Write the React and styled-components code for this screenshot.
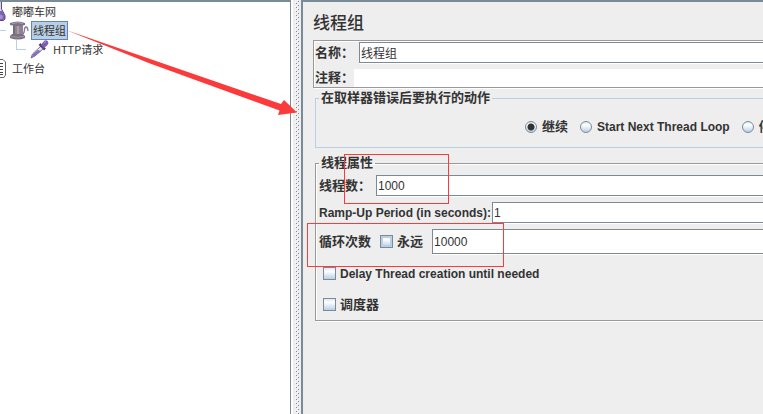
import React, { useState } from 'react'
import styled, { createGlobalStyle } from 'styled-components'

const GlobalStyle = createGlobalStyle`
    * {
        box-sizing: border-box;
    }

    body {
        margin: 0;
        overflow: hidden;
        background: #eee;
        color: #333;
        font-family: "Liberation Sans", "Noto Sans CJK SC", sans-serif;
        font-size: 12px;
    }
`;

const FlaskIcon = () => (
    <svg width="8" height="19" viewBox="0 0 8 19">
        <path d="M0 0H1.500V7L5 13.500V17L3.500 18.500H0Z" fill="#d9d3e6" />
        <path d="M0 9H2.500L5 14V17L3.500 18.500H0Z" fill="#7d62b5" />
        <path d="M0 13Q2 12 3 15L2 17H0Z" fill="#a58fd0" />
        <path d="M1.500 0V7L5 13.500V17L3.500 18.500H0" fill="none" stroke="#5f4c86" />
    </svg>
);

const SpoolIcon = () => (
    <svg width="19" height="19" viewBox="0 0 19 19">
        <path d="M3 4H13V14H3Z" fill="#8d8490" />
        <path d="M3 4H5V14H3Z" fill="#756c7b" />
        <path d="M7 4H9V14H7Z" fill="#aaa1ad" />
        <path d="M0 2Q8 -1 15 2V4Q8 6 0 4Z" fill="#7c7281" />
        <path d="M2 2.500Q8 0.500 13 2.500" fill="none" stroke="#aaa0b0" />
        <path d="M2 13H13L15 15V17Q8 20 0 17V15Z" fill="#7a707f" />
        <path d="M1 15.500Q8 17 14 15.500" fill="none" stroke="#a198aa" />
        <path d="M12 13C16 13 13 6 16 6C18 6 17.500 8 18 10" fill="none" stroke="#8177a0" strokeWidth="1.300" />
    </svg>
);

const DropperIcon = () => (
    <svg width="19" height="19" viewBox="0 0 19 19">
        <path d="M11 6L13.500 8.500L5 16L1 18L2.500 14Z" fill="#e3e5ef" stroke="#77728d" />
        <path d="M8 10L11 11L5 16L1.500 17.500L3 14Z" fill="#8b6dbd" />
        <path d="M9.500 4L15 9.500" stroke="#514276" strokeWidth="2.500" />
        <path d="M11 5L14 1Q16 -0.500 18 1.500Q19 4 17 5.500L14 8Z" fill="#7d5eb3" />
        <path d="M14 3L16 1.500" stroke="#ad96d0" />
    </svg>
);

const ClipboardIcon = () => (
    <svg width="8" height="19" viewBox="0 0 8 19">
        <path d="M0 0.500H3L5.500 3V16L4 18.500H0" fill="#fff" stroke="#666" />
        <path d="M0 4.500H3M0 7.500H3M0 10.500H3M0 13.500H3M0 15.500H3" stroke="#444" />
    </svg>
);

function Tree() {
    return (
        <TreePane>
            <TreeRow>
                <FlaskIcon />
                <TreeLabel>嘟嘟车网</TreeLabel>
            </TreeRow>
            <TreeRow>
                <Branch $width={6} />
                <SpoolIcon />
                <TreeLabel $selected>线程组</TreeLabel>
            </TreeRow>
            <TreeRow>
                <Branch $indent={16} $width={10} $corner />
                <DropperIcon />
                <TreeLabel>HTTP请求</TreeLabel>
            </TreeRow>
            <TreeRow>
                <ClipboardIcon />
                <TreeLabel>工作台</TreeLabel>
            </TreeRow>
        </TreePane>
    );
}

function SplitBar() {
    return (
        <Divider>
            <svg width="5" height="100%">
                <defs>
                    <pattern id="grip" width="5" height="4" patternUnits="userSpaceOnUse">
                        <rect x="0" y="2" width="1" height="1" fill="#fff" />
                        <rect x="1" y="3" width="1" height="1" fill="#7a8a99" />
                        <rect x="2" y="0" width="1" height="1" fill="#fff" />
                        <rect x="3" y="1" width="1" height="1" fill="#7a8a99" />
                    </pattern>
                </defs>
                <rect width="5" height="100%" fill="url(#grip)" />
            </svg>
        </Divider>
    );
}

const actions = [
    { name: '继续' },
    { name: 'Start Next Thread Loop', latin: true },
    { name: '停止线程' },
];

function App() {
    const [action, setAction] = useState('继续');

    return (
        <Page>
            <GlobalStyle />
            <Tree />
            <SplitBar />
            <EditorPane>
                <Title>线程组</Title>
                <NameBox>
                    <NameRow>
                        <Label htmlFor="name">名称：</Label>
                        <TextField id="name" defaultValue="线程组" />
                    </NameRow>
                    <CommentRow>
                        <Label htmlFor="comment">注释：</Label>
                        <CommentField id="comment" />
                    </CommentRow>
                </NameBox>

                <Group $color="#b8cfe5">
                    <Legend>在取样器错误后要执行的动作</Legend>
                    <RadioRow>
                        {actions.map(({ name, latin }) => (
                            <Choice key={name} $latin={latin}>
                                <Radio
                                    name="action"
                                    checked={action === name}
                                    onChange={() => setAction(name)}
                                />
                                {name}
                            </Choice>
                        ))}
                    </RadioRow>
                </Group>

                <Group $color="#999" $etched>
                    <Legend>线程属性</Legend>
                    <Fields>
                        <FieldRow $gap={5}>
                            <Label htmlFor="threads">线程数：</Label>
                            <TextField id="threads" defaultValue="1000" />
                        </FieldRow>
                        <FieldRow $gap={1}>
                            <Label htmlFor="ramp" $latin>Ramp-Up Period (in seconds):</Label>
                            <TextField id="ramp" defaultValue="1" />
                        </FieldRow>
                        <FieldRow $gap={9}>
                            <Label htmlFor="loops">循环次数</Label>
                            <Choice>
                                <Checkbox $hot />
                                永远
                            </Choice>
                            <TextField id="loops" defaultValue="10000" $tall />
                        </FieldRow>
                    </Fields>
                    <CheckRow>
                        <Choice $latin><Checkbox />Delay Thread creation until needed</Choice>
                    </CheckRow>
                    <CheckRow>
                        <Choice><Checkbox />调度器</Choice>
                    </CheckRow>
                </Group>
            </EditorPane>

            {/* red notes drawn over the window */}
            <Mark $x={344} $y={154} $w={105} $h={50} />
            <Mark $x={307} $y={223} $w={197} $h={44} />
            <Arrow width="300" height="120" viewBox="0 0 300 120">
                <path d="M66 30L281 104L284 100L297 112.500L278 115L279.500 110.500L150 63.500Z" fill="#fb3b3b" />
            </Arrow>
        </Page>
    );
}

const Page = styled.div`
    position: relative;
    display: flex;
    min-height: 100vh;
    overflow: hidden;
`;

const TreePane = styled.div`
    flex: 0 0 291px;
    background: #fff;
    border-top: 2px solid #7a8a99;
    border-right: 1px solid #7a8a99;
`;

const TreeRow = styled.div`
    display: flex;
    align-items: center;
    height: 19px;

    svg {
        flex: none;
    }
`;

const TreeLabel = styled.span`
    height: 19px;
    margin-left: 2px;
    padding: 0 1px;
    border: 1px solid ${(p) => (p.$selected ? '#6382bf' : 'transparent')};
    background: ${(p) => (p.$selected ? '#b8cfe5' : 'none')};
    font-family: "Noto Sans CJK SC", sans-serif;
    font-size: 11px;
    line-height: 17px;
    white-space: nowrap;
`;

const Branch = styled.span`
    align-self: flex-start;
    width: ${(p) => p.$width}px;
    height: 10px;
    margin-left: ${(p) => p.$indent || 0}px;
    margin-right: 4px;
    border-bottom: 1px solid #b8cfe5;
    border-left: ${(p) => (p.$corner ? '1px solid #b8cfe5' : 'none')};
`;

const Divider = styled.div`
    flex: 0 0 10px;
    display: flex;
    padding-left: 2px;
    border-left: 2px solid #fff;
    background: #eee;
`;

const EditorPane = styled.main`
    flex: 1;
    min-width: 0;
    padding: 10px 0 0 10px;
    border-top: 2px solid #7a8a99;
    border-left: 2px solid #7a8a99;
    overflow: hidden;
    white-space: nowrap;
`;

const Title = styled.h1`
    margin: 0;
    height: 28px;
    font-size: 17px;
    font-weight: 500;
    line-height: 24px;
`;

const NameBox = styled.div`
    margin-right: -20px;
    border: 1px solid #999;
    box-shadow: 1px 1px #fff, inset 1px 1px #fff;
`;

const NameRow = styled.div`
    display: flex;
    align-items: center;
    gap: 5px;
    padding: 1px 0 6px 1px;
`;

const CommentRow = styled.div`
    display: flex;
    align-items: center;
    padding-left: 1px;
`;

const Label = styled.label`
    flex: none;
    font-size: ${(p) => (p.$latin ? 12 : 13)}px;
    font-weight: bold;
    line-height: 18px;
`;

const TextField = styled.input`
    flex: 1;
    min-width: 0;
    height: ${(p) => (p.$tall ? 25 : 21)}px;
    padding: 0 1px;
    border: 1px solid #7a8a99;
    border-radius: 0;
    background: #fff;
    box-shadow: 0 1px #fff;
    color: #333;
    font: inherit;
    outline: none;
`;

const CommentField = styled(TextField)`
    height: 18px;
    border: none;
    box-shadow: none;
`;

const Group = styled.fieldset`
    min-width: 0;
    margin: 1px -20px 0 2px;
    padding: 0;
    border: 1px solid ${(p) => p.$color};
    box-shadow: ${(p) => (p.$etched ? '1px 1px #fff, inset 1px 1px #fff' : 'none')};

    & + & {
        margin-top: 6px;
    }
`;

const Legend = styled.legend`
    height: 18px;
    margin-left: 3px;
    padding: 0 2px;
    font-size: 13px;
    font-weight: bold;
    line-height: 18px;
`;

const Choice = styled.label`
    display: flex;
    flex: none;
    align-items: center;
    gap: 4px;
    font-size: ${(p) => (p.$latin ? 12 : 13)}px;
    font-weight: bold;
    line-height: 18px;
`;

const RadioRow = styled.div`
    display: flex;
    align-items: center;
    gap: 12px;
    height: 40px;
    padding-left: 209px;

    ${Choice} {
        gap: 5px;
    }
`;

const Radio = styled.input.attrs({ type: 'radio' })`
    appearance: none;
    width: 12px;
    height: 12px;
    margin: 0;
    border: 1px solid #7a8a99;
    border-radius: 50%;
    background: linear-gradient(#dde8f3, #fff 30%, #b8cfe5);

    &:checked {
        background: radial-gradient(circle, #333 3px, transparent 4px), linear-gradient(#dde8f3, #fff 30%, #b8cfe5);
    }
`;

const Checkbox = styled.input.attrs({ type: 'checkbox' })`
    appearance: none;
    width: 13px;
    height: 13px;
    margin: 0;
    border: 1px solid #7a8a99;
    background: linear-gradient(#dde8f3, #fff 30%, #b8cfe5);
    box-shadow: ${(p) => (p.$hot ? 'inset 0 0 0 2px #b8cfe5' : 'none')};

    &:checked {
        background: #333;
    }
`;

const Fields = styled.div`
    display: flex;
    flex-direction: column;
    gap: 6px;
    padding: 3px 0 4px 3px;
`;

const FieldRow = styled.div`
    display: flex;
    align-items: center;
    gap: ${(p) => p.$gap}px;
`;

const CheckRow = styled.div`
    display: flex;
    align-items: center;
    height: 31px;
    padding-left: 7px;
`;

const Mark = styled.div`
    position: absolute;
    left: ${(p) => p.$x}px;
    top: ${(p) => p.$y}px;
    width: ${(p) => p.$w}px;
    height: ${(p) => p.$h}px;
    border: 1px solid #fb3b3b;
    pointer-events: none;
`;

const Arrow = styled.svg`
    position: absolute;
    left: 0;
    top: 0;
    pointer-events: none;
`;

export default App
